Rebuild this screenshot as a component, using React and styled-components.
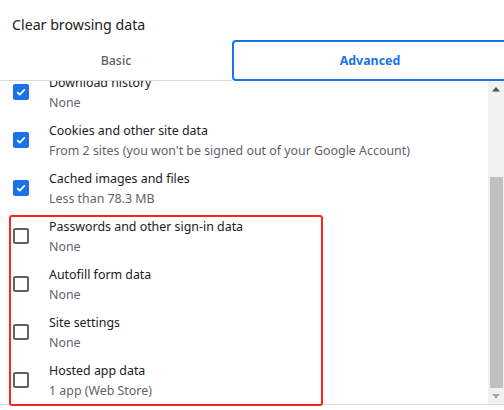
import React, { useEffect, useRef, useState } from 'react'
import styled, { createGlobalStyle } from 'styled-components'

const GlobalStyle = createGlobalStyle`
  html, body {
    margin: 0;
    padding: 0;
    background: #ffffff;
  }
  body {
    font-family: "Noto Sans", "Open Sans", Arial, sans-serif;
    color: #202124;
  }
`

const Dialog = styled.div`
  position: relative;
  width: 504px;
  height: 410px;
  overflow: hidden;
  background: #fff;
`

const Title = styled.h1`
  margin: 0;
  padding: 15px 0 0 12px;
  height: 25px;
  font-size: 14.2px;
  font-weight: 400;
  line-height: 20px;
  color: #202124;
`

const Tabs = styled.div`
  display: flex;
  height: 41px;
  margin-right: -4px;
`

const Tab = styled.div`
  display: flex;
  align-items: center;
  justify-content: center;
  box-sizing: border-box;
  font-size: 12.4px;
  ${p => p.$active ? `
    flex: 0 0 276px;
    height: 41px;
    border: 2px solid #1a73e8;
    border-radius: 4px;
    color: #1a73e8;
    font-weight: 700;
  ` : `
    flex: 0 0 232px;
    height: 41px;
    border-bottom: 1px solid #dadce0;
    color: #5f6368;
    font-weight: 500;
  `}
`

const Body = styled.div`
  display: flex;
  height: 323px;
  border-bottom: 1px solid #dadce0;
`

const List = styled.div`
  flex: 1;
  overflow-y: auto;
  scrollbar-width: none;
  &::-webkit-scrollbar { display: none; }
`

const TimeRange = styled.div`
  display: flex;
  align-items: center;
  gap: 16px;
  height: 61px;
  padding-left: 13px;
  box-sizing: border-box;
  font-size: 12.4px;
  color: #5f6368;
`

const Select = styled.div`
  padding: 5px 28px 5px 8px;
  background: #f1f3f4;
  border-radius: 4px;
  color: #202124;
`

const Row = styled.label`
  display: flex;
  align-items: center;
  height: 48px;
  padding-left: 13px;
  gap: 20px;
`

const Box = styled.span`
  flex: 0 0 auto;
  width: 16px;
  height: 16px;
  box-sizing: border-box;
  border-radius: 2px;
  display: flex;
  align-items: center;
  justify-content: center;
  ${p => p.$checked ? `
    background: #1a73e8;
  ` : `
    border: 2px solid #5f6368;
  `}
`

const Text = styled.div`
  display: flex;
  flex-direction: column;
  padding-top: 2px;
  font-size: 12.4px;
  line-height: 20px;
`

const Label = styled.span`
  color: #202124;
`

const Sub = styled.span`
  color: #5f6368;
`

const Scrollbar = styled.div`
  flex: 0 0 16px;
  display: flex;
  flex-direction: column;
  background: #f1f1f1;
`

const Arrow = styled.div`
  height: 16px;
  display: flex;
  align-items: center;
  justify-content: center;
`

const Track = styled.div`
  flex: 1;
  position: relative;
`

const Thumb = styled.div`
  position: absolute;
  left: 2px;
  right: 1px;
  background: #c1c1c1;
`

const Highlight = styled.div`
  position: absolute;
  left: 9px;
  top: 215px;
  width: 314px;
  height: 191px;
  box-sizing: border-box;
  border: 2px solid #ff2222;
  border-radius: 3px;
  pointer-events: none;
`

const items = [
  { label: 'Browsing history', sub: 'None', checked: true },
  { label: 'Download history', sub: 'None', checked: true },
  { label: 'Cookies and other site data', sub: "From 2 sites (you won't be signed out of your Google Account)", checked: true },
  { label: 'Cached images and files', sub: 'Less than 78.3 MB', checked: true },
  { label: 'Passwords and other sign-in data', sub: 'None', checked: false },
  { label: 'Autofill form data', sub: 'None', checked: false },
  { label: 'Site settings', sub: 'None', checked: false },
  { label: 'Hosted app data', sub: '1 app (Web Store)', checked: false },
]

const Check = () => (
  <svg width="10" height="8" viewBox="0 0 10 8">
    <path d="M1.2 4.2 L3.8 6.6 L8.8 1.4" fill="none" stroke="#fff" strokeWidth="1.8" />
  </svg>
)

const Triangle = ({ down }) => (
  <svg width="8" height="5" viewBox="0 0 8 5">
    <path d={down ? 'M0 0 H8 L4 4.5 Z' : 'M0 4.5 H8 L4 0 Z'} fill={down ? '#a3a3a3' : '#505050'} />
  </svg>
)

const App = () => {
  const listRef = useRef(null)
  const [thumb, setThumb] = useState({ top: 0, height: 0 })

  useEffect(() => {
    const el = listRef.current
    el.scrollTop = el.scrollHeight
    const update = () => {
      const track = el.clientHeight - 32
      const height = Math.round(track * el.clientHeight / el.scrollHeight)
      const max = el.scrollHeight - el.clientHeight
      const top = max ? Math.round((track - height) * el.scrollTop / max) : 0
      setThumb({ top, height })
    }
    update()
    el.addEventListener('scroll', update)
    return () => el.removeEventListener('scroll', update)
  }, [])

  return (
    <>
      <GlobalStyle />
      <Dialog>
        <Title>Clear browsing data</Title>
        <Tabs>
          <Tab>Basic</Tab>
          <Tab $active>Advanced</Tab>
        </Tabs>
        <Body>
          <List ref={listRef}>
            <TimeRange>
              Time range
              <Select>Last hour</Select>
            </TimeRange>
            {items.map(item => (
              <Row key={item.label}>
                <Box $checked={item.checked}>{item.checked && <Check />}</Box>
                <Text>
                  <Label>{item.label}</Label>
                  <Sub>{item.sub}</Sub>
                </Text>
              </Row>
            ))}
          </List>
          <Scrollbar>
            <Arrow><Triangle /></Arrow>
            <Track>
              <Thumb style={{ top: thumb.top, height: thumb.height }} />
            </Track>
            <Arrow><Triangle down /></Arrow>
          </Scrollbar>
        </Body>
        <Highlight />
      </Dialog>
    </>
  )
}

export default App
